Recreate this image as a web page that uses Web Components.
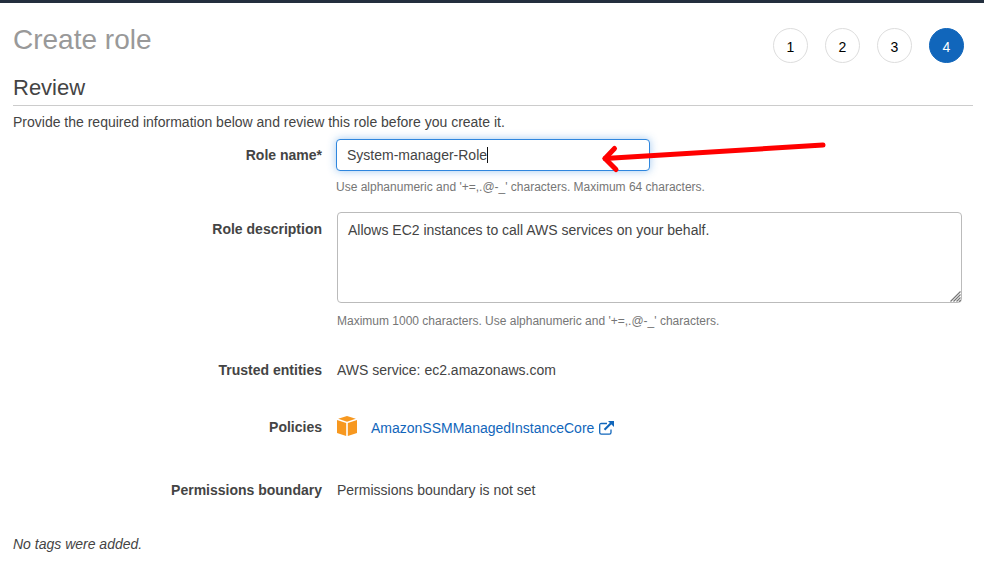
<!DOCTYPE html>
<html lang="en">
<head>
<meta charset="utf-8">
<title>Create role</title>
<style>
  body { margin: 0; background: #fff; color: #444; font: 14px/20px "Liberation Sans", Arial, sans-serif; }
</style>
</head>
<body>
<role-wizard></role-wizard>

<template id="role-wizard">
  <style>
    :host { display: block; border-top: 3px solid #232f3e; padding: 0 11px 8px 13px; }
    header { display: flex; justify-content: space-between; align-items: flex-start; padding: 20px 9px 0 0; }
    h1 { margin: 0; font-size: 28px; line-height: 34px; font-weight: 400; color: #999; }
    wizard-steps { margin-top: 5px; }
    h2 { margin: 11px 0 0; padding-bottom: 3px; font-size: 22px; line-height: 28px; font-weight: 400; border-bottom: 1px solid #ccc; }
    p { margin: 6px 0 0; }
    form { padding: 7px 11px 0 0; display: grid; }
    text-field + text-field { margin-top: 16px; }
    .trusted { margin-top: 30px; }
    .policies { margin-top: 37px; }
    .boundary { margin-top: 43px; }
    .tags { margin-top: 34px; font-style: italic; }
  </style>
  <header>
    <h1>Create role</h1>
    <wizard-steps count="4" current="4"></wizard-steps>
  </header>
  <h2>Review</h2>
  <p>Provide the required information below and review this role before you create it.</p>
  <form>
    <text-field label="Role name*" value="System-manager-Role" active>Use alphanumeric and '+=,.@-_' characters. Maximum 64 characters.</text-field>
    <text-field label="Role description" value="Allows EC2 instances to call AWS services on your behalf." multiline>Maximum 1000 characters. Use alphanumeric and '+=,.@-_' characters.</text-field>
    <detail-row class="trusted" label="Trusted entities">AWS service: ec2.amazonaws.com</detail-row>
    <detail-row class="policies" label="Policies"><policy-link>AmazonSSMManagedInstanceCore</policy-link></detail-row>
    <detail-row class="boundary" label="Permissions boundary">Permissions boundary is not set</detail-row>
  </form>
  <p class="tags">No tags were added.</p>
</template>

<template id="wizard-steps">
  <style>
    :host { display: block; }
    ol { display: flex; gap: 17px; margin: 0; padding: 0; list-style: none; }
    li { box-sizing: border-box; width: 35px; height: 35px; padding-top: 2px; border: 1px solid #ddd; border-radius: 50%; display: grid; place-items: center; color: #000; }
    li[aria-current] { background: #1166bb; border-color: #1166bb; color: #fff; }
  </style>
  <ol></ol>
</template>

<template id="text-field">
  <style>
    :host { display: grid; grid-template-columns: 309px minmax(0, 1fr); column-gap: 15px; }
    :host([active]) { column-gap: 14px; }
    label { font-weight: 700; text-align: right; padding-top: 6px; }
    :host([multiline]) label { padding-top: 7px; }
    .box { position: relative; display: grid; }
    :host([active]) .box { max-width: 314px; }
    input, textarea { box-sizing: border-box; width: 100%; margin: 0; border: 1px solid #bbb; border-radius: 4px; background: #fff; color: #444; font: inherit; outline: none; }
    input { height: 32px; padding: 0 10px; }
    :host([active]) input { border-color: #2e86de; box-shadow: 0 0 8px rgba(46, 134, 222, .45); }
    textarea { height: 91px; padding: 7px 10px; resize: none; }
    small { display: block; margin-top: 7px; font-size: 12px; line-height: 18px; color: #767676; }
    :host([multiline]) small { margin-top: 9px; }
    .caret { position: absolute; top: 8px; width: 1px; height: 16px; background: #111; }
    .arrow { position: absolute; left: 264px; top: 0; width: 230px; height: 36px; overflow: visible; pointer-events: none; }
    .grip { position: absolute; right: 1px; bottom: 1px; width: 11px; height: 11px; pointer-events: none; }
  </style>
  <label for="field"></label>
  <div>
    <div class="box"></div>
    <small><slot></slot></small>
  </div>
</template>

<template id="arrow">
  <svg class="arrow" viewBox="0 0 230 36" fill="none" stroke="#f00" stroke-linecap="round" stroke-linejoin="round" aria-hidden="true">
    <path d="M223 6 5 19.500" stroke-width="5"/>
    <path d="M14.500 9.500 5 19.500 16 30.500" stroke-width="5"/>
  </svg>
</template>

<template id="grip">
  <svg class="grip" viewBox="0 0 11 11" fill="none" stroke="#777" stroke-width="1.200" aria-hidden="true">
    <path d="M0.500 10.500 10.500 0.500M3.500 10.500 10.500 3.500M6.500 10.500 10.500 6.500M9 10.800 10.800 9"/>
  </svg>
</template>

<template id="detail-row">
  <style>
    :host { display: grid; grid-template-columns: 309px minmax(0, 1fr); column-gap: 15px; }
    strong { text-align: right; }
  </style>
  <strong></strong><div><slot></slot></div>
</template>

<template id="policy-link">
  <style>
    :host { display: flex; align-items: flex-start; gap: 14px; height: 20px; margin-top: -1px; }
    a { display: flex; align-items: center; gap: 5px; padding-top: 2px; color: #1166bb; text-decoration: none; }
    svg { display: block; flex: none; }
  </style>
  <svg width="20" height="20" viewBox="0 0 20 20" fill="#f7981f" aria-hidden="true">
    <path d="M10 0 18.800 2.700 10 5.800 1.200 2.700Z"/>
    <path d="M0 4 9.200 7V20L0 17Z"/>
    <path d="M20 4 10.800 7V20L20 17Z"/>
  </svg>
  <a href="#policy"><slot></slot>
    <svg width="15" height="14" viewBox="0 0 15 14" fill="none" stroke="#1166bb" stroke-width="1.300" aria-hidden="true">
      <path d="M8 2.500H2.300Q.7 2.500.7 4.100V11.500Q.7 13.200 2.300 13.200H10.400Q12 13.200 12 11.500V8.500"/>
      <path d="M5.500 8.800 12 2.300" stroke-width="2.200"/>
      <path d="M9 0H15V6Z" fill="#1166bb" stroke="none"/>
    </svg></a>
</template>

<script>
  const copy = (id) => document.getElementById(id).content.cloneNode(true);
  const stamp = (host, id) => {
    const root = host.attachShadow({ mode: "open" });
    root.append(copy(id));
    return root;
  };

  customElements.define("wizard-steps", class extends HTMLElement {
    connectedCallback() {
      if (this.shadowRoot) return;
      const list = stamp(this, "wizard-steps").querySelector("ol");
      for (let i = 1; i <= Number(this.getAttribute("count")); i++) {
        const item = document.createElement("li");
        item.textContent = i;
        if (i === Number(this.getAttribute("current"))) item.setAttribute("aria-current", "step");
        list.append(item);
      }
    }
  });

  customElements.define("text-field", class extends HTMLElement {
    connectedCallback() {
      if (this.shadowRoot) return;
      const root = stamp(this, "text-field");
      const multiline = this.hasAttribute("multiline");
      root.querySelector("label").textContent = this.getAttribute("label");
      const field = document.createElement(multiline ? "textarea" : "input");
      field.id = "field";
      field.value = this.getAttribute("value");
      const box = root.querySelector(".box");
      box.append(field);
      if (multiline) box.append(copy("grip"));
      if (this.hasAttribute("active")) {
        const pen = document.createElement("canvas").getContext("2d");
        pen.font = '14px "Liberation Sans", Arial, sans-serif';
        const caret = document.createElement("span");
        caret.className = "caret";
        caret.style.left = Math.round(11 + pen.measureText(field.value).width) + "px";
        box.append(caret, copy("arrow"));
      }
    }
  });

  customElements.define("detail-row", class extends HTMLElement {
    connectedCallback() {
      if (this.shadowRoot) return;
      stamp(this, "detail-row").querySelector("strong").textContent = this.getAttribute("label");
    }
  });

  customElements.define("policy-link", class extends HTMLElement {
    connectedCallback() { if (!this.shadowRoot) stamp(this, "policy-link"); }
  });

  customElements.define("role-wizard", class extends HTMLElement {
    connectedCallback() { if (!this.shadowRoot) stamp(this, "role-wizard"); }
  });
</script>
</body>
</html>
